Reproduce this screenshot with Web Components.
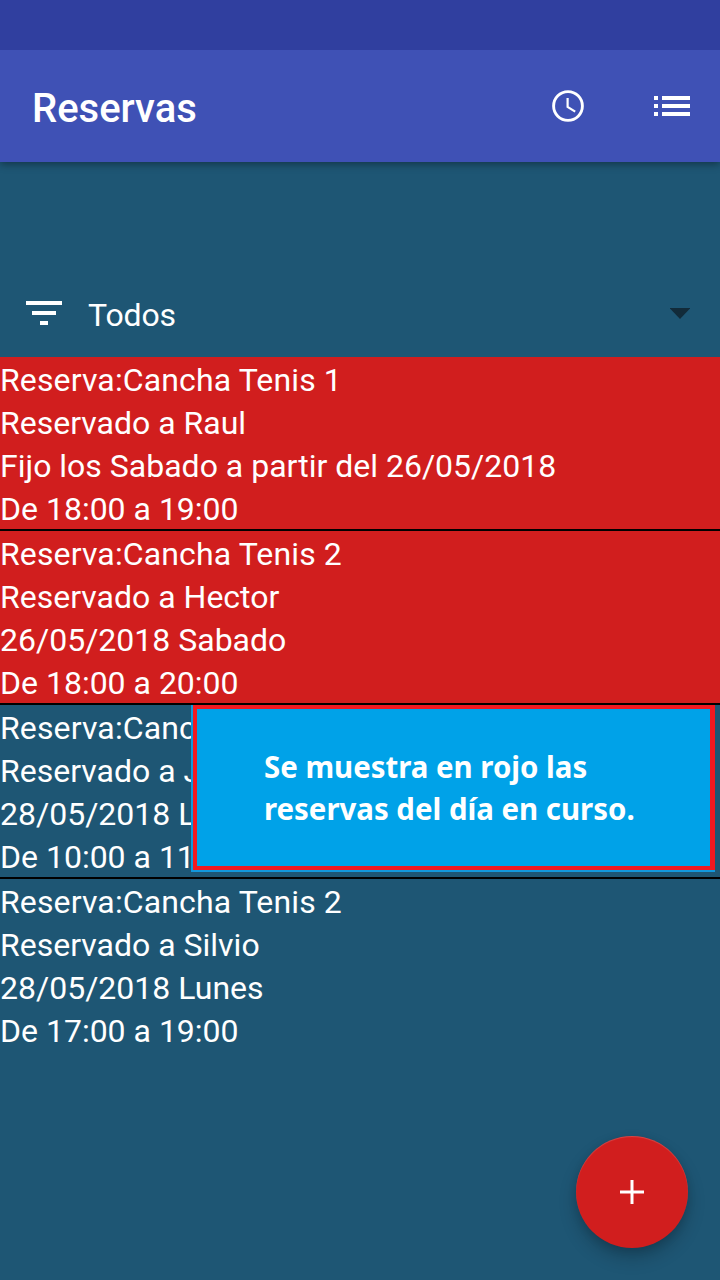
<!DOCTYPE html>
<html lang="es">
<head>
<meta charset="utf-8">
<title>Reservas</title>
<style>
html, body { margin: 0; height: 100%; }
body { font-family: Roboto, "Liberation Sans", sans-serif; color: #fff; background: #1e5674; overflow: hidden; }
</style>
</head>
<body>
<reservas-app></reservas-app>
<script>
const define = (name, html) => {
  const template = document.createElement('template');
  template.innerHTML = html;
  customElements.define(name, class extends HTMLElement {
    constructor() {
      super();
      this.attachShadow({ mode: 'open' }).append(template.content.cloneNode(true));
    }
  });
};

define('app-bar', `
<style>
:host { display: block; position: relative; z-index: 1; background: #3f51b5; box-shadow: 0 2px 8px rgba(0,0,0,.4); }
.status { height: 50px; background: #303f9f; }
.bar { height: 112px; display: flex; align-items: center; padding: 0 24px 0 32px; box-sizing: border-box; }
h1 { flex: 1; margin: 6px 0 0; font-size: 40px; line-height: 48px; font-weight: 500; }
.actions { display: flex; gap: 56px; }
</style>
<div class="status"></div>
<div class="bar"><h1><slot></slot></h1><div class="actions"><slot name="action"></slot></div></div>`);

define('clock-icon', `
<style>:host, svg { display: block; width: 48px; height: 48px; }</style>
<svg viewBox="0 0 48 48" fill="none" stroke="#fff"><circle cx="24" cy="24" r="14.4" stroke-width="2.9"/><path d="M23.6 16v9l7.6 4.6" stroke-width="2.2"/></svg>`);

define('list-icon', `
<style>:host, svg { display: block; width: 48px; height: 48px; }</style>
<svg viewBox="0 0 48 48" fill="#fff"><path d="M6 14h4v4H6zM14 14h28v4H14zM6 22h4v4H6zM14 22h28v4H14zM6 30h4v4H6zM14 30h28v4H14z"/></svg>`);

define('filter-select', `
<style>
:host { display: flex; align-items: center; height: 86px; margin-top: 109px; padding: 0 30px 0 20px; }
.filter { width: 48px; height: 48px; flex: none; margin-bottom: 2px; }
span { flex: 1; margin: 3px 0 0 20px; font-size: 32px; line-height: 43px; letter-spacing: -.15px; }
.arrow { width: 20px; height: 12px; }
</style>
<svg class="filter" viewBox="0 0 48 48" fill="#fff"><path d="M6 12h36v4H6zM12 22h24v4H12zM20 32h8v4h-8z"/></svg>
<span><slot></slot></span>
<svg class="arrow" viewBox="0 0 20 12"><path d="M0 0h20v.6L10 11 0 .6z" fill="#122b3a"/></svg>`);

define('reserva-item', `
<style>
:host { display: block; font-size: 32px; line-height: 43px; height: 172px; white-space: nowrap; border-bottom: 2px solid #000; }
:host([hoy]) { background: #d11e1e; }
:host(:last-of-type) { border-color: transparent; }
::slotted(p) { margin: 0; position: relative; top: 2px; }
::slotted(p:first-child) { letter-spacing: .13px; }
</style>
<slot></slot>`);

define('nota-aviso', `
<style>
:host { position: absolute; z-index: 2; left: 191px; top: 705px; width: 524px; height: 167px; box-sizing: border-box; background: #1298dc; padding: 0 0 2px 2px; }
.box { box-sizing: border-box; height: 165px; border: 4px solid #f31820; border-right-width: 5px; background: #00a2e8; padding: 37px 0 0 67px;
 font: 700 30px/42px "Noto Sans", sans-serif; white-space: nowrap; }
::slotted(span) { display: block; width: max-content; transform: scaleX(.98); transform-origin: left center; }
</style>
<div class="box"><slot></slot></div>`);

define('add-button', `
<style>
:host { position: absolute; z-index: 3; right: 32px; bottom: 32px; width: 112px; height: 112px; display: grid; place-items: center; border-radius: 50%; background: #d11e1e; box-shadow: 0 10px 18px rgba(0,0,0,.2), 0 3px 8px rgba(0,0,0,.12), inset 0 1px 1px rgba(255,255,255,.18); }
svg { width: 24px; height: 24px; }
</style>
<svg viewBox="0 0 24 24" stroke="#fff" stroke-width="3"><path d="M0 12h24M12 0v24"/></svg>`);

define('reservas-app', `
<style>
:host { display: block; position: relative; width: 720px; height: 1280px; background: #1e5674; }
</style>
<app-bar>Reservas<clock-icon slot="action"></clock-icon><list-icon slot="action"></list-icon></app-bar>
<filter-select>Todos</filter-select>
<main>
<reserva-item hoy><p>Reserva:Cancha Tenis 1</p><p>Reservado a Raul</p><p>Fijo los Sabado a partir del 26/05/2018</p><p>De 18:00 a 19:00</p></reserva-item>
<reserva-item hoy><p>Reserva:Cancha Tenis 2</p><p>Reservado a Hector</p><p>26/05/2018 Sabado</p><p>De 18:00 a 20:00</p></reserva-item>
<reserva-item><p>Reserva:Canc</p><p>Reservado a J</p><p>28/05/2018 L</p><p>De 10:00 a 11</p></reserva-item>
<reserva-item><p>Reserva:Cancha Tenis 2</p><p>Reservado a Silvio</p><p>28/05/2018 Lunes</p><p>De 17:00 a 19:00</p></reserva-item>
</main>
<nota-aviso><span>Se muestra en rojo las</span><span>reservas del día en curso.</span></nota-aviso>
<add-button></add-button>`);
</script>
</body>
</html>
